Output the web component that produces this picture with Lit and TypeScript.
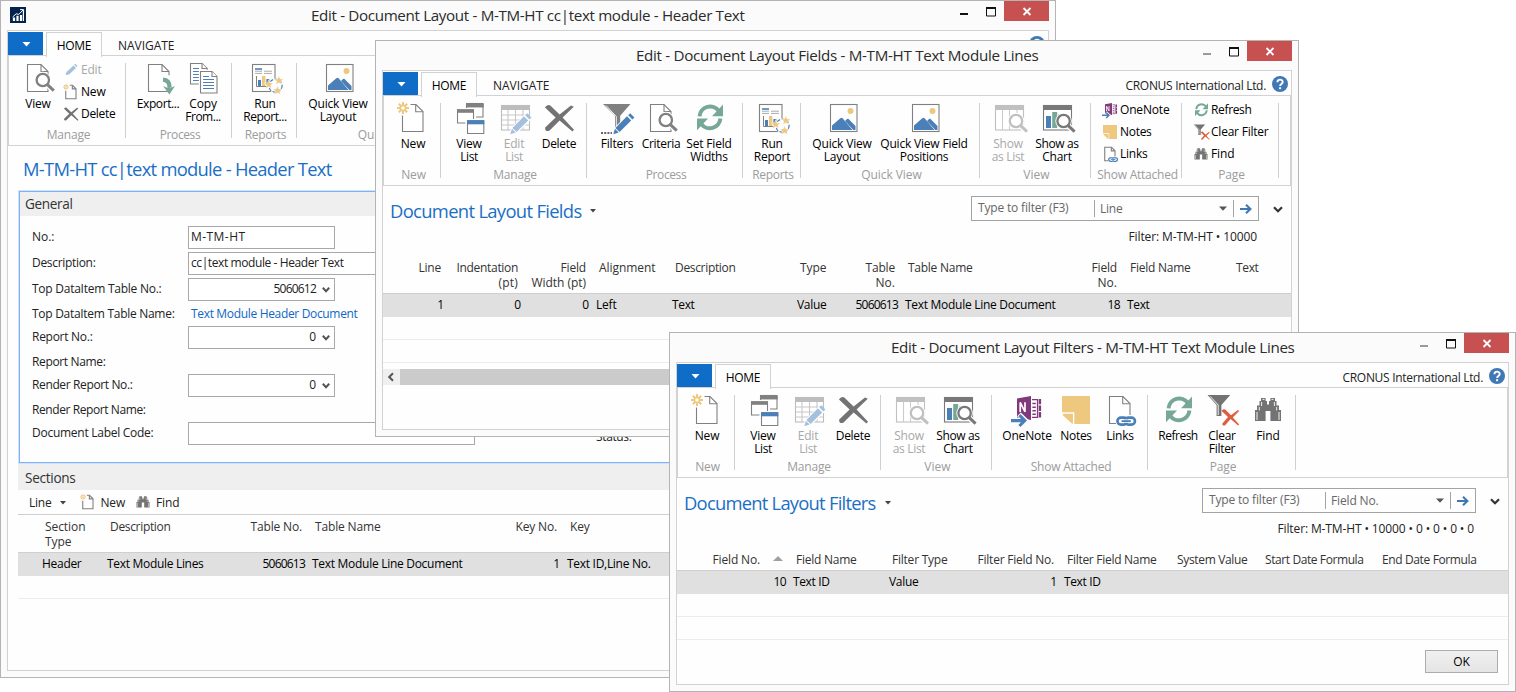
import { LitElement, html, svg, css, nothing, TemplateResult } from "lit";
import { customElement } from "lit/decorators.js";
import { styleMap } from "lit/directives/style-map.js";

type Line = [string, number];
interface Big { icon: string; at: number; lines: Line[]; off?: boolean }
interface Small { icon: string; text: Line; off?: boolean }
interface Group { w: number; cap: Line; big?: Big[]; small?: Small[]; smallPad?: number }
interface Col { w: number; right?: boolean; head: Line[]; val?: Line; sort?: boolean }

const GREY = "#737373";
const BLUE = "#4a7fb8";
const GOLD = "#edc87e";
const GREEN = "#76a797";

/* Page outline with a folded corner, 21 x 27 units. */
const page = (x: number, y: number, c = GREY) => svg`
  <path d="M${x} ${y}h13.5l7 7v20h-20.5z" fill="#fff" stroke=${c} class="ln"/>
  <path d="M${x + 13.5} ${y}v7h7" fill="none" stroke=${c} class="ln"/>`;
const lens = (x: number, y: number, c = "#808080") => svg`
  <path d="M${x + 4} ${y + 4}l7.5 7.5" stroke="#fff" stroke-width="5.5"/>
  <circle cx=${x} cy=${y} r="8.3" fill="#fff"/>
  <circle cx=${x} cy=${y} r="6.2" fill="none" stroke=${c} stroke-width="2.3"/>
  <path d="M${x + 4.6} ${y + 4.6}l6.4 6" stroke=${c} stroke-width="3"/>`;
const star = (x: number, y: number) => svg`
  <path transform="translate(${x} ${y})" fill=${GOLD} stroke="#fff" stroke-width=".4"
    d="M0-4.6L1.3-1.4 4.6-1.3 2.1.8 3 4.2 0 2.3-3 4.2-2.1.8-4.6-1.3-1.3-1.4z"/>`;
const burst = svg`<g stroke=${GOLD} fill="none" stroke-width="2">
  <circle cx="6" cy="6" r="2.6" stroke-width="1.6"/>
  <path d="M6 0v3.4M6 8.6V12M0 6h3.4M8.6 6H12M1.8 1.8l2.4 2.4M7.8 7.8l2.4 2.4M10.2 1.8L7.8 4.2M4.2 7.8l-2.4 2.4"/></g>`;
const pencil = (c: string) => svg`
  <path d="M12.5 32l1.3-5L27 13.8l4 4L17.6 31z" fill="#fff" stroke="#fff" stroke-width="2.4"/>
  <path d="M12.3 32.2l1.6-5.4 3.8 3.8z" fill=${c}/>
  <path d="M14.4 25.9L26 14.3l4.2 4.2L18.6 30.1z" fill=${c}/>
  <path d="M27.2 13.2l2-2 4.2 4.2-2 2z" fill=${c}/>`;
const cross = (c: string) => svg`
  <path fill=${c} d="M2 5.6C3.4 3 6 2.3 7.6 3.8L16.6 12.6 28 3.6 30.8 4.8 19.6 15.6 31 27.8 29.4 29.6 16.6 18.4 6.6 28.6C4 30 1.6 28.4 2.2 25.4L12.6 15.4z"/>`;
const picture = svg`
  <rect x="4.5" y="2.5" width="26.5" height="27" fill="#fff" stroke="#808080" class="ln"/>
  <circle cx="24.5" cy="9" r="3" fill=${GOLD}/>
  <path d="M6 28v-4.5l8.3-7.3c.8-.7 1.6-.7 2.3.1L26.5 28z" fill=${BLUE}/>
  <path d="M19 19l1.8-1.8c.6-.5 1.4-.5 2 .1L29.5 24v4h-2.2z" fill=${BLUE}/>`;
const tableTop = (x: number, c: string) => svg`
  <rect x=${x + 0.5} y="3.5" width="28" height="24.5" fill="#fff" stroke=${c} class="ln"/>
  <rect x=${x} y="3" width="29" height="5" fill=${c}/>`;

const ICONS: Record<string, TemplateResult | unknown> = {
  newPage: svg`<path d="M13.5 2.5h5.5l7 7v20H5.5V13.5" fill="#fff" stroke="#808080" class="ln"/>
    <path d="M18.7 2.5v7.2H26" fill="none" stroke="#808080" class="ln"/>${burst}`,
  view: svg`${page(5.5, 2.5, "#808080")}${lens(20.8, 18)}`,
  viewList: svg`<g fill="#fff" stroke="#808080" class="ln">
      <path d="M13.5 3h16.5v12h-16.5z"/><path d="M13 3.2h17.5" stroke-width="4.5"/>
      <path d="M3 6.5h19.5v16H3z" stroke="#fff"/>
      <path d="M4.5 8h16v13h-16z"/></g><path d="M4 9h17" stroke="#808080" stroke-width="3.6"/>
      <path d="M13 3.2h17.5" stroke="#808080" stroke-width="3.6"/>
      <g fill="#fff" stroke="#808080" class="ln"><path d="M13 17.5h20v16H13z" stroke="#fff"/>
      <path d="M14.5 19h16.3v12.5H14.5z"/></g><path d="M14 20.2h17.3" stroke=${BLUE} stroke-width="4.2"/>`,
  editList: svg`${tableTop(3, "#bdbdbd")}<path d="M4 13h27M4 18h27M4 23h27M10 8v20M17.5 8v20M25 8v20" stroke="#c8c8c8" class="ln"/>
    ${pencil("#a5c0de")}`,
  delete: cross(GREY),
  filters: svg`<path d="M2 2h27.5L19.2 13.8V27l-5.2 1V13.8z" fill="#808080"/>
    <path d="M5 3.5L15.3 14.5V27" fill="none" stroke="#fff" stroke-width=".9"/>
    ${pencil(BLUE)}<path d="M0 31h11" stroke="#666" stroke-width="2" stroke-dasharray="2 1.2"/>`,
  refresh: svg`<g fill=${GREEN}><path d="M19 14.3H30V2.6z"/><path d="M15 16.5H4V28.2z"/></g>
    <g fill="none" stroke=${GREEN} stroke-width="4"><path d="M6.6 14.3A10.6 10.6 0 0 1 25.8 9"/>
    <path d="M27.4 16.5A10.6 10.6 0 0 1 8.2 21.8"/></g>`,
  report: svg`<rect x="3.5" y="2.5" width="22.5" height="27" fill="#fff" stroke="#808080" class="ln"/>
    <path d="M6 7h7" stroke=${BLUE} stroke-width="1.6"/>
    <path d="M6 9.2h7M6 11.4h7M15 9.2h8M15 11.4h8" stroke="#aaa"/>
    <path d="M7.5 14v10.5H18" fill="none" stroke="#808080"/>
    <path d="M9 18h3v6H9z" fill=${BLUE}/><path d="M13 14h3.4v10H13z" fill=${GOLD}/><path d="M17.4 17h3v6h-3z" fill=${BLUE}/>
    <circle cx="26.5" cy="23.7" r="7.4" fill="#fff"/>
    <circle cx="26.5" cy="23.7" r="6.6" fill="none" stroke=${BLUE} stroke-width="1.2" stroke-dasharray="3.4 1.6"/>
    ${star(19.7, 22.3)}${star(29.9, 18.4)}${star(28.5, 28.4)}`,
  picture,
  showList: svg`${tableTop(3, "#c0c0c0")}<path d="M10.5 8v20M17.5 8v20M25 8v20" stroke="#ccc" class="ln"/>${lens(24, 19, "#c0c0c0")}`,
  showChart: svg`${tableTop(2, "#787878")}<path d="M5 14h5v12H5z" fill=${BLUE}/><path d="M11.2 10h5v16h-5z" fill=${GREEN}/>
    <path d="M17.5 12h5v12h-5z" fill="#707070"/>${lens(22.6, 19, "#787878")}`,
  oneNote: svg`<path d="M21 5.6h5.6v17.8H21" fill="none" stroke="#80397b" stroke-width="1.4"/>
    <path d="M21.4 9.6h3.4M21.4 13.2h3.4M21.4 16.8h3.4M21.4 20.2h3.4" stroke="#80397b" stroke-width="1.5"/>
    <path d="M29 4.9v19" stroke="#80397b" stroke-width="2.2" stroke-dasharray="5.4 1.2"/>
    <path d="M6 4.4L20 2v24L6 23.6z" fill="#80397b"/>
    <path d="M9.2 18V8.4l4.8 9.4V8.2" fill="none" stroke="#fff" stroke-width="1.7"/>
    <path d="M0 26.6h12M8 20.4l6.4 6.2L8 32.6" fill="none" stroke="#fff" stroke-width="5.4"/>
    <path d="M0 26.6h13M8.4 21.2l5.4 5.4-5.4 5.4" fill="none" stroke=${BLUE} stroke-width="3.1"/>`,
  notes: svg`<path d="M2 2h28v28H13L2 19z" fill=${GOLD}/><path d="M2 19h11.6V30" fill="none" stroke="#fff" stroke-width="1.4"/>
    <path d="M2 20.4h10.4V30z" fill=${GOLD}/>`,
  links: svg`<path d="M12 29.5H5.5v-27H19l7 7V21" fill="#fff" stroke="#808080" class="ln"/>
    <path d="M18.7 2.5v7.2H26" fill="none" stroke="#808080" class="ln"/>
    <g fill="none" stroke=${BLUE} stroke-width="2.6"><rect x="13.4" y="23.6" width="10" height="7" rx="3.5"/>
    <rect x="21" y="23.6" width="10" height="7" rx="3.5"/></g>
    <path d="M18 27.1h8.4" stroke="#fff" stroke-width="3.4"/><path d="M17.6 27.1h9.2" stroke=${BLUE} stroke-width="1.8"/>`,
  clearFilter: svg`<path d="M1.5 1h22.8L15.4 11v11h-4.8V11z" fill=${GREY}/>
    <path d="M4.2 2.4L12.2 11v10" fill="none" stroke="#fff" stroke-width=".9"/>
    <path d="M15.6 17c1-2 3-2.4 4.4-.8l5 5 6.6-5 1.8.6-6.6 6.6 6.4 7-1 1-7.6-6.4-5.2 6c-1.6 1.2-3.4.4-3-1.6l5.6-6.4z" fill="#dd5f41"/>`,
  find: svg`<g fill=${GREY}><path d="M9 4h4.6v3h1.4v3.6h2V7h1.4V4H23v3h1.5v4.5H27V16h2v11H18.4V17h-4.8v10H3V16h2v-4.5h2.5V7H9z"/></g>
    <path d="M9.6 8v4M22.4 8v4M7.3 13v3.4M24.7 13v3.4M5 18v8M27 18v8M10.5 5.4h2M19.5 5.4h2" stroke="#fff" stroke-width=".9"/>`,
  export: svg`${page(6.5, 2.5, "#808080")}
    <path d="M20.5 15.6c6.5.2 9.4 3.4 9.4 8.4" fill="none" stroke="#fff" stroke-width="7"/>
    <path d="M21 17.6c4.4.2 6.6 3 6.6 8" fill="none" stroke=${GREEN} stroke-width="4.4"/>
    <path d="M21 24l6.4 8.4L33 24l-3.4 1.4h-5z" fill=${GREEN}/>`,
  copy: svg`<g stroke="#808080" class="ln" fill="#fff"><path d="M3.5 1.5h11.7l5 5v15.5H3.5z"/><path d="M15 1.5v5h5"/></g>
    <path d="M6 6.5h6M6 9.5h11M6 12.5h11M6 15.5h11M6 18.5h11" stroke=${BLUE} stroke-width="1.2"/>
    <path d="M11.8 7.8h20v24h-20z" fill="#fff"/>
    <g stroke="#808080" class="ln" fill="#fff"><path d="M13.5 9.5h11.5l5 5v16.5H13.5z"/><path d="M25 9.5v5h5"/></g>
    <path d="M16 14.5h6M16 17.5h11M16 20.5h11M16 23.5h11M16 26.5h11" stroke=${BLUE} stroke-width="1.2"/>`,
  edit: svg`<path d="M5 26l2-6L21 7l5 5L12 25z" fill="#a5c0de"/><path d="M22.4 5.6l2.2-2 4.6 4.4-2.2 2.2z" fill="#a5c0de"/>`,
};

const icon = (name: string, small = false) => svg`
  <svg class=${small ? "ic sm" : "ic"} viewBox="0 0 32 32">${ICONS[name]}</svg>`;

const t = (line: Line, cls = "") => html`<span class="t ${cls}" data-w=${line[1]}>${line[0]}</span>`;

const MANAGE: Group = {
  w: 146, cap: ["Manage", 43], big: [
    { icon: "viewList", at: 28, lines: [["View", 25], ["List", 17]] },
    { icon: "editList", at: 73, lines: [["Edit", 20], ["List", 17]], off: true },
    { icon: "delete", at: 118, lines: [["Delete", 34]] }],
};
const NEW: Group = { w: 57, cap: ["New", 24], big: [{ icon: "newPage", at: 29, lines: [["New", 24]] }] };
const VIEW: Group = {
  w: 111, cap: ["View", 26], big: [
    { icon: "showList", at: 28, lines: [["Show", 29], ["as List", 32]], off: true },
    { icon: "showChart", at: 77, lines: [["Show as", 43], ["Chart", 29]] }],
};

const RIBBON_CARD: Group[] = [
  { w: 117, cap: ["Manage", 43], big: [{ icon: "view", at: 29, lines: [["View", 25]] }], smallPad: 9,
    small: [{ icon: "edit", text: ["Edit", 20], off: true }, { icon: "newPage", text: ["New", 24] }, { icon: "delete", text: ["Delete", 34] }] },
  { w: 106, cap: ["Process", 40], big: [
    { icon: "export", at: 32, lines: [["Export...", 42]] }, { icon: "copy", at: 77, lines: [["Copy", 27], ["From...", 35]] }] },
  { w: 65, cap: ["Reports", 41], big: [{ icon: "report", at: 33, lines: [["Run", 21], ["Report...", 43]] }] },
  { w: 180, cap: ["Quick View", 60], big: [{ icon: "picture", at: 41, lines: [["Quick View", 59], ["Layout", 36]] }] },
];
const RIBBON_FIELDS: Group[] = [
  NEW, MANAGE,
  { w: 156, cap: ["Process", 40], big: [
    { icon: "filters", at: 30, lines: [["Filters", 32]] }, { icon: "view", at: 74, lines: [["Criteria", 38]] },
    { icon: "refresh", at: 122, lines: [["Set Field", 45], ["Widths", 37]] }] },
  { w: 58, cap: ["Reports", 41], big: [{ icon: "report", at: 29, lines: [["Run", 21], ["Report", 36]] }] },
  { w: 179, cap: ["Quick View", 60], big: [
    { icon: "picture", at: 41, lines: [["Quick View", 59], ["Layout", 36]] },
    { icon: "picture", at: 123, lines: [["Quick View Field", 87], ["Positions", 48]] }] },
  VIEW,
  { w: 91, cap: ["Show Attached", 80], smallPad: 11, small: [
    { icon: "oneNote", text: ["OneNote", 49] }, { icon: "notes", text: ["Notes", 31] }, { icon: "links", text: ["Links", 27] }] },
  { w: 97, cap: ["Page", 26], smallPad: 11, small: [
    { icon: "refresh", text: ["Refresh", 40] }, { icon: "clearFilter", text: ["Clear Filter", 57] }, { icon: "find", text: ["Find", 23] }] },
];
const RIBBON_FILTERS: Group[] = [
  NEW, MANAGE, VIEW,
  { w: 156, cap: ["Show Attached", 80], big: [
    { icon: "oneNote", at: 35, lines: [["OneNote", 49]] }, { icon: "notes", at: 84, lines: [["Notes", 31]] },
    { icon: "links", at: 128, lines: [["Links", 27]] }] },
  { w: 148, cap: ["Page", 26], big: [
    { icon: "refresh", at: 30, lines: [["Refresh", 39]] }, { icon: "clearFilter", at: 74, lines: [["Clear", 27], ["Filter", 26]] },
    { icon: "find", at: 120, lines: [["Find", 23]] }] },
];

const SECTION_COLS: Col[] = [
  { w: 20, head: [] },
  { w: 65, head: [["Section", 40], ["Type", 26]], val: ["Header", 39] },
  { w: 135, head: [["Description", 60]], val: ["Text Module Lines", 96] },
  { w: 70, right: true, head: [["Table No.", 51]], val: ["5060613", 42] },
  { w: 185, head: [["Table Name", 65]], val: ["Text Module Line Document", 150] },
  { w: 70, right: true, head: [["Key No.", 41]], val: ["1", 5] },
  { w: 200, head: [["Key", 19]], val: ["Text ID,Line No.", 83] },
];
const FIELD_COLS: Col[] = [
  { w: 64, right: true, head: [["Line", 22]], val: ["1", 5] },
  { w: 77, right: true, head: [["Indentation", 61], ["(pt)", 19]], val: ["0", 6] },
  { w: 68, right: true, head: [["Field", 25], ["Width (pt)", 54]], val: ["0", 6] },
  { w: 76, head: [["Alignment", 56]], val: ["Left", 20] },
  { w: 125, head: [["Description", 60]], val: ["Text", 22] },
  { w: 53, head: [["Type", 26]], val: ["Value", 29] },
  { w: 55, right: true, head: [["Table", 29], ["No.", 19]], val: ["5060613", 42] },
  { w: 164, head: [["Table Name", 64]], val: ["Text Module Line Document", 150] },
  { w: 58, right: true, head: [["Field", 25], ["No.", 19]], val: ["18", 12] },
  { w: 106, head: [["Field Name", 60]], val: ["Text", 22] },
  { w: 62, head: [["Text", 22]] },
];
const FILTER_COLS: Col[] = [
  { w: 112, right: true, sort: true, head: [["Field No.", 47]], val: ["10", 12] },
  { w: 96, head: [["Field Name", 60]], val: ["Text ID", 36] },
  { w: 80, head: [["Filter Type", 55]], val: ["Value", 29] },
  { w: 95, right: true, head: [["Filter Field No.", 76]], val: ["1", 5] },
  { w: 110, head: [["Filter Field Name", 89]], val: ["Text ID", 36] },
  { w: 88, head: [["System Value", 70]] },
  { w: 117, head: [["Start Date Formula", 98]] },
  { w: 120, head: [["End Date Formula", 94]] },
];

@customElement("app-root")
export class AppRoot extends LitElement {
  static styles = css`
    :host { display: block; position: relative; width: 1516px; height: 692px; overflow: hidden; background: #fff;
      font: 12px/15px "Open Sans", "Noto Sans", sans-serif; color: #222; }
    * { box-sizing: border-box; }
    .t { white-space: pre; display: inline-block; flex: none; }
    .win { position: absolute; display: flex; flex-direction: column; background: #fbfbfb; border: 1px solid #b4b4b4; padding: 0 6px 6px; }
    .w1 { left: 0; top: 0; width: 1056px; height: 678px; }
    .w2 { left: 375px; top: 40px; width: 924px; height: 397px; }
    .w3 { left: 669px; top: 332px; width: 847px; height: 360px; }
    .bar { display: flex; flex: none; height: 29px; }
    .logo { width: 16px; height: 16px; margin: 6px 0 0 3px; flex: none; }
    .wt { font-size: 15.2px; line-height: 28px; color: #2b2b2b; }
    .ctl { display: flex; margin-left: auto; height: 20px; }
    .ctl svg { width: 90px; height: 20px; display: block; }
    .inner { flex: 1; min-height: 0; border: 1px solid #d2d2d2; background: #fefefe; display: flex; flex-direction: column; }
    .tabs { display: flex; flex: none; height: 25px; padding-top: 1px; color: #222; }
    .app { width: 35px; height: 23px; background: #0f6dc8; display: grid; place-items: center; padding: 1px 0 0 2px; }
    .app svg { width: 9px; height: 5px; }
    .tab { width: 56px; margin-left: 3px; height: 25px; border: 1px solid #d2d2d2; border-bottom: 0; background: #fefefe; display: flex;
      justify-content: center; z-index: 1; line-height: 26px; color: #000; font-size: 12px; }
    .tab2 { margin-left: 16px; line-height: 28px; font-size: 12px; }
    .co { margin: 0 6px 0 auto; line-height: 28px; }
    .help { width: 16px; height: 16px; margin: 4px 3px 0 0; }
    .rib { flex: none; display: flex; height: 91px; border: 1px solid #d2d2d2; }
    .inner .rib { margin-top: -1px; }
    .grp { margin-top: 7px; height: 75px; border-right: 1px solid #d0d0d0; display: flex; flex-direction: column; flex: none; }
    .items { display: flex; height: 65px; flex: none; color: #000; }
    .big { width: 32px; flex: none; display: flex; flex-direction: column; align-items: center; margin-top: -1px; line-height: 13px; }
    .ic { width: 32px; height: 32px; overflow: visible; flex: none; display: block; margin-bottom: 3px; }
    .ic .ln { stroke-width: 1.1; }
    .ic.sm { width: 16px; height: 16px; margin: 0; }
    .ic.sm .ln { stroke-width: 2.2; }
    .off { color: #a8a8a8; }
    .smalls { margin-top: -4px; display: flex; flex-direction: column; }
    .small { display: flex; align-items: center; height: 22px; gap: 2px; }
    .small .t { margin-top: -2px; }
    .cap { display: flex; justify-content: center; padding-left: 3px; line-height: 14px; color: #9c9c9c; }
    .h { font-size: 18.4px; line-height: 24px; color: #1a6fc5; }
    .h1 { margin: 11px 0 0 15px; flex: none; height: 34px; }
    .headrow { display: flex; flex: none; height: 42px; padding: 10px 0 0 7px; align-items: flex-start; }
    .headrow .h { margin-top: 3px; }
    .car { width: 6px; height: 4px; margin: 13px 0 0 9px; }
    .search { margin-left: auto; display: flex; height: 25px; border: 1px solid #a3a3a3; padding: 3px 0; color: #666; }
    .w2 .search { width: 288px; } .w3 .search { width: 274px; }
    .q { width: 123px; padding: 0 0 0 6px; border-right: 1px solid #a3a3a3; line-height: 16px; }
    .sel { flex: 1; display: flex; align-items: center; justify-content: space-between; padding: 0 6px 0 5px; border-right: 1px solid #a3a3a3; }
    .sel svg { width: 8px; height: 5px; }
    .go { width: 24px; display: grid; place-items: center; }
    .go svg { width: 12px; height: 10px; }
    .chev { width: 10px; height: 7px; margin: 10px 8px 0 14px; }
    .flt { display: flex; justify-content: flex-end; padding-right: 34px; height: 32px; flex: none; padding-top: 1px; }
    .head, .row { display: flex; flex: none; }
    .head { align-items: flex-start; border-bottom: 1px solid #cfcfcf; color: #333; }
    .head.two { height: 34px; } .head.one { height: 19px; }
    .c { display: flex; flex-direction: column; flex: none; padding: 0 6px 0 7px; align-items: flex-start; position: relative; }
    .row .c { padding: 0 3px 0 4px; }
    .c.r { align-items: flex-end; }
    .c.sort { flex-direction: row; justify-content: flex-end; align-items: flex-start; gap: 13px; }
    .c.sort svg { width: 10px; height: 5px; margin-top: 4px; }
    .row { height: 23px; background: #e0e0e0; line-height: 22px; color: #000; }
    .blank { height: 23px; border-bottom: 1px solid #ececec; flex: none; }
    .scroll { margin-top: 6px; display: flex; height: 16px; background: #efefef; flex: none; }
    .scroll svg { width: 16px; height: 16px; }
    .thumb { flex: 1; background: #cbcbcb; margin-left: 1px; }
    .body { margin: 0 0 0 10px; flex: none; }
    .gen { border: 1px solid #7fb1f7; box-shadow: 0 0 0 1px #cfe2fc; margin-left: 1px; height: 272px; }
    .ft { height: 24px; background: #efefef; font-size: 13.6px; line-height: 23px; padding-left: 5px; color: #333; }
    .form { display: grid; grid-template-columns: 156px 408px 1fr; padding: 10px 0 0 12px; }
    .col { display: flex; flex-direction: column; }
    .cell { height: 26px; line-height: 22px; flex: none; }
    .cell.s { height: 22px; line-height: 20px; }
    .link { padding-left: 3px; color: #0f67c5; }
    .inp { height: 23px; width: 147px; border: 1px solid #a8a8ab; background: #fff; line-height: 18px; padding: 0 4px 2px 2px; margin-bottom: 3px; display: flex; align-items: center; }
    .inp.num { justify-content: flex-end; gap: 6px; }
    .inp.wide { width: 287px; }
    .inp svg { width: 8px; height: 6px; margin-top: 3px; }
    .status { align-self: end; padding-bottom: 4px; }
    .sect { margin-top: 1px; height: 26px; line-height: 27px; padding-left: 7px; }
    .tools { display: flex; height: 25px; align-items: center; padding-left: 11px; border-bottom: 1px solid #cfcfcf; }
    .tools .car { margin: 2px 14px 0 8px; }
    .tools .ic { margin-right: 5px; }
    .tools .n { margin-right: 10px; }
    .tools + .head { padding-top: 4px; height: 38px; }
    .ok { align-self: flex-end; margin: 10px 10px 0 0; width: 73px; height: 23px; border: 1px solid #acacac;
      background: linear-gradient(#f0f0f0, #e5e5e5); display: grid; place-items: center; color: #000; flex: none; }
  `;

  firstUpdated() {
    this.renderRoot.querySelectorAll<HTMLElement>(".t").forEach((el) => {
      const want = Number(el.dataset.w);
      const n = (el.textContent ?? "").length;
      if (n > 1) el.style.letterSpacing = `${((want + 0.5 - el.getBoundingClientRect().width) / n).toFixed(3)}px`;
    });
  }

  private bar(title: Line, left: number, logo: boolean, dim: boolean) {
    return html`<div class="bar">
      ${logo ? html`<svg class="logo" viewBox="0 0 16 16"><rect width="16" height="16" fill="#04224e"/>
        <path d="M4 14V10.5M7.5 14V8.8M11 14V8" stroke="#fff" stroke-width="2.2"/>
        <path d="M13.4 14V4" stroke="#fff" stroke-width="1.2"/>
        <path d="M2.6 10l3.6-3.2 2.6.6L13 3M10 2.6h3.6v3.2" fill="none" stroke="#fff" stroke-width="1"/></svg>` : nothing}
      <div class="wt" style=${styleMap({ marginLeft: `${left}px` })}>${t(title)}</div>
      <div class="ctl"><svg viewBox="0 0 90 20"><rect x="45" width="45" height="20" fill="#c75050"/>
        <path d="M64.5 7l7 7M71.5 7l-7 7" stroke="#fff" stroke-width="1.8"/>
        <path d="M27.5 7v8h9V7z" fill="none" stroke="#111"/><path d="M27 7h10" stroke="#111" stroke-width="2"/>
        <path d="M1 13h8" stroke=${dim ? "#999" : "#111"} stroke-width="2"/></svg></div>
    </div>`;
  }

  private tabs(second: boolean, company: boolean) {
    return html`<div class="tabs">
      <div class="app"><svg viewBox="0 0 9 5"><path d="M.5 0h8l-4 4.6z" fill="#fff"/></svg></div>
      <div class="tab">${t(["HOME", 34])}</div>
      ${second ? html`<div class="tab2">${t(["NAVIGATE", 56])}</div>` : nothing}
      <div class="co">${company ? t(["CRONUS International Ltd.", 140]) : nothing}</div>
      <svg class="help" viewBox="0 0 16 16"><circle cx="8" cy="8" r="8" fill="#3f78b5"/>
        <path d="M5.4 6.2C5.4 2.8 10.7 2.9 10.7 6c0 2-2.6 2-2.6 4" fill="none" stroke="#fff" stroke-width="1.9"/>
        <rect x="7.1" y="11.2" width="2" height="2" fill="#fff"/></svg>
    </div>`;
  }

  private ribbon(groups: Group[]) {
    return html`<div class="rib">${groups.map((g) => html`
      <div class="grp" style=${styleMap({ width: `${g.w}px` })}>
        <div class="items">
          ${(g.big ?? []).map((b, i, all) => html`
            <div class="big ${b.off ? "off" : ""}" style=${styleMap({ marginLeft: `${b.at - 16 - (i ? all[i - 1].at + 16 : 0)}px` })}>
              ${icon(b.icon)}${b.lines.map((l) => t(l))}</div>`)}
          ${g.small ? html`<div class="smalls" style=${styleMap({ marginLeft: `${g.smallPad}px` })}>
            ${g.small.map((s) => html`<div class="small ${s.off ? "off" : ""}">${icon(s.icon, true)}${t(s.text)}</div>`)}</div>` : nothing}
        </div>
        <div class="cap">${t(g.cap)}</div>
      </div>`)}</div>`;
  }

  private table(cols: Col[], two: boolean, blanks: number) {
    const w = (c: Col) => styleMap({ width: `${c.w}px` });
    return html`<div class="head ${two ? "two" : "one"}">${cols.map((c) => html`
        <div class="c ${c.right ? "r" : ""} ${c.sort ? "sort" : ""}" style=${w(c)}>${c.head.map((l) => t(l))}
          ${c.sort ? html`<svg viewBox="0 0 10 5"><path d="M0 5L5 0l5 5z" fill="#a0a0a0"/></svg>` : nothing}</div>`)}</div>
      <div class="row">${cols.map((c) => html`<div class="c ${c.right ? "r" : ""}" style=${w(c)}>${c.val ? t(c.val) : nothing}</div>`)}</div>
      ${Array.from({ length: blanks }, () => html`<div class="blank"></div>`)}`;
  }

  private caret() {
    return html`<svg class="car" viewBox="0 0 6 4"><path d="M0 0h6L3 3.6z" fill="#444"/></svg>`;
  }

  private finder(title: Line, field: Line, filter: Line) {
    return html`<div class="headrow"><div class="h">${t(title)}</div>${this.caret()}
        <div class="search"><div class="q">${t(["Type to filter (F3)", 90])}</div>
          <div class="sel">${t(field)}<svg viewBox="0 0 8 5"><path d="M0 .5h8L4 4.8z" fill="#555"/></svg></div>
          <div class="go"><svg viewBox="0 0 12 10"><path d="M0 5h10M6 .8L10.4 5 6 9.2" fill="none" stroke="#3f78b5" stroke-width="2.1"/></svg></div></div>
        <svg class="chev" viewBox="0 0 10 7"><path d="M1 1.2l4 4 4-4" fill="none" stroke="#333" stroke-width="2.2"/></svg></div>
      <div class="flt">${t(filter)}</div>`;
  }

  private num(v: Line) {
    return html`<div class="inp num">${t(v)}<svg viewBox="0 0 8 6"><path d="M.8 .8L4 4.2 7.2 .8" fill="none" stroke="#555" stroke-width="2"/></svg></div>`;
  }

  private card() {
    const labels: [string, number, boolean?][] = [["No.:", 22], ["Description:", 63], ["Top DataItem Table No.:", 129],
      ["Top DataItem Table Name:", 142, true], ["Report No.:", 60], ["Report Name:", 73, true],
      ["Render Report No.:", 100], ["Render Report Name:", 113, true], ["Document Label Code:", 121]];
    return html`<div class="win w1">${this.bar(["Edit - Document Layout - M-TM-HT cc|text module - Header Text", 433], 285, true, false)}
      <div class="inner">${this.tabs(true, false)}${this.ribbon(RIBBON_CARD)}
        <div class="h h1">${t(["M-TM-HT cc|text module - Header Text", 308])}</div>
        <div class="body">
          <div class="gen"><div class="ft">${t(["General", 47])}</div>
            <div class="form">
              <div class="col">${labels.map((l) => html`<div class="cell ${l[2] ? "s" : ""}">${t([l[0], l[1]])}</div>`)}</div>
              <div class="col">
                <div class="inp">${t(["M-TM-HT", 54])}</div>
                <div class="inp wide">${t(["cc|text module - Header Text", 152])}</div>
                ${this.num(["5060612", 42])}
                <div class="cell s link">${t(["Text Module Header Document", 166])}</div>
                ${this.num(["0", 6])}<div class="cell s"></div>${this.num(["0", 6])}<div class="cell s"></div>
                <div class="inp wide"></div>
              </div>
              <div class="status">${t(["Status:", 35])}</div>
            </div></div>
          <div class="ft sect">${t(["Sections", 50])}</div>
          <div class="tools">${t(["Line", 22])}${this.caret()}${icon("newPage", true)}${t(["New", 24], "n")}${icon("find", true)}${t(["Find", 23])}</div>
          ${this.table(SECTION_COLS, true, 1)}
        </div>
      </div></div>`;
  }

  render() {
    return html`${this.card()}
      <div class="win w2">${this.bar(["Edit - Document Layout Fields - M-TM-HT Text Module Lines", 402], 254, false, true)}
        <div class="inner">${this.tabs(true, true)}${this.ribbon(RIBBON_FIELDS)}
          ${this.finder(["Document Layout Fields", 191], ["Line", 22], ["Filter: M-TM-HT • 10000", 128])}
          ${this.table(FIELD_COLS, true, 2)}
          <div class="scroll"><svg viewBox="0 0 16 16"><path d="M10 4.2L6.2 8l3.8 3.8" fill="none" stroke="#555" stroke-width="2"/></svg><div class="thumb"></div></div>
        </div></div>
      <div class="win w3">${this.bar(["Edit - Document Layout Filters - M-TM-HT Text Module Lines", 403], 215, false, true)}
        <div class="inner">${this.tabs(false, true)}${this.ribbon(RIBBON_FILTERS)}
          ${this.finder(["Document Layout Filters", 191], ["Field No.", 47], ["Filter: M-TM-HT • 10000 • 0 • 0 • 0 • 0", 196])}
          ${this.table(FILTER_COLS, false, 2)}
          <div class="ok">${t(["OK", 16])}</div>
        </div></div>`;
  }
}
